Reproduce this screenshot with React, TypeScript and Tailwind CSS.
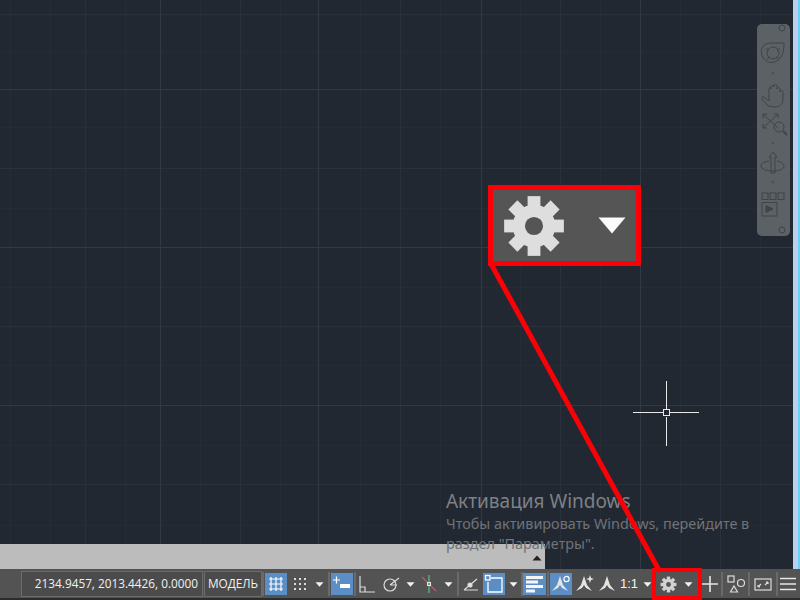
import React from "react";

const Arrow = ({ x = 0 }: { x?: number }) => (
  <svg width="9" height="5" viewBox="0 0 9 5" className="shrink-0" style={x ? { marginLeft: x } : undefined}>
    <path d="M0.5 0.2h8L4.5 4.8z" fill="#f2f2f2" />
  </svg>
);

const Sep = () => <div className="h-[24px] w-[2px] shrink-0 bg-[#6a6a6a]" />;
const Gap = ({ w }: { w: number }) => <div className="shrink-0" style={{ width: w }} />;

const Gear = ({ size, fill = "#d2d2d2", hole = "#555" }: { size: number; fill?: string; hole?: string }) => {
  const teeth = [0, 45, 90, 135, 180, 225, 270, 315];
  return (
    <svg width={size} height={size} viewBox="0 0 24 24">
      {teeth.map((a) => (
        <rect key={a} x="9.6" y="0.8" width="4.8" height="6" fill={fill} transform={`rotate(${a} 12 12)`} />
      ))}
      <circle cx="12" cy="12" r="8" fill={fill} />
      <circle cx="12" cy="12" r="3.4" fill={hole} />
    </svg>
  );
};

const Cell = ({ w, active, children }: { w: number; active?: boolean; children?: React.ReactNode }) => (
  <div
    className={`h-[22px] flex items-center justify-center shrink-0 ${active ? "bg-[#5c8ec6]" : ""}`}
    style={{ width: w }}
  >
    {children}
  </div>
);

const S = ({ children, w = 20, h = 20 }: { children: React.ReactNode; w?: number; h?: number }) => (
  <svg width={w} height={h} viewBox={`0 0 ${w} ${h}`} fill="none" stroke="#dcdcdc" strokeWidth="1.2">
    {children}
  </svg>
);

const Adaptive = ({ extra }: { extra?: React.ReactNode }) => (
  <svg width="20" height="20" viewBox="0 0 20 20">
    <path d="M9 2 12 11 17 17 11 14 9 11 7 14 1 17 6 11z" fill="#e4e4e4" />
    {extra}
  </svg>
);

function Canvas() {
  const vMajor = [160, 318, 481, 640];
  const vMid = [85, 240, 400, 560, 720];
  const hMajor = [89, 247, 405];
  const hMid = [14, 168, 326, 484];
  const v = [10, 50, 125, 200, 280, 360, 440, 520, 600, 680, 760];
  const h = [52, 127, 208, 287, 365, 445, 525];
  const V = (xs: number[], c: string) =>
    xs.map((x) => <line key={x} x1={x + 0.5} x2={x + 0.5} y1="0" y2="600" stroke={c} strokeWidth="1" />);
  const H = (ys: number[], c: string) =>
    ys.map((y) => <line key={y} y1={y + 0.5} y2={y + 0.5} x1="0" x2="800" stroke={c} strokeWidth="1" />);
  return (
    <svg className="absolute inset-0" width="800" height="600">
      {V(v, "#252c36")}
      {H(h, "#252c36")}
      {V(vMid, "#2a313c")}
      {H(hMid, "#2a313c")}
      {V(vMajor, "#323945")}
      {H(hMajor, "#323945")}
    </svg>
  );
}

function NavBar() {
  const c = "#3f4449";
  return (
    <div className="absolute left-[757px] top-[24px] w-[33px] h-[212px] rounded-[5px] bg-[#5c6166]">
      <svg width="33" height="212" viewBox="0 0 33 212" fill="none" stroke={c} strokeWidth="1">
        <circle cx="25" cy="4" r="3" />
        <path d="M16 19c6 0 9 0 11 0 0 7-1 11-3 14-5 7-13 7-17 2-4-5-3-11 0-14 3-2 6-2 9-2z" />
        <circle cx="16" cy="29" r="6" />
        <path d="M9 24l3 3M23 24l-3 3M10 35l3-2M22 35l-3-2" />
        <path d="M14.5 48.5h3L16 50.5z" fill={c} stroke="none" />
        <path d="M11 82c-2-3-5-5-6-7-1-2 1-3 2-2l5 4V65c0-2 2-2 2 0v-2c0-2 3-2 3 0v-1c0-2 3-2 3 0v3c0-2 3-2 3 0v3c0-2 3-2 3 0v7c0 5-3 8-8 8-3 0-5-1-7-1z" />
        <path d="M6 90 21 104M21 90 6 104M6 90v4M6 90h4M21 90h-4M21 90v4M6 104v-4M6 104h4" />
        <circle cx="22" cy="103" r="5" />
        <path d="M26 107l4 4" strokeWidth="2" />
        <path d="M14.5 118.5h3L16 120.5z" fill={c} stroke="none" />
        <path d="M16 128l-4 5h2v16h4v-16h2z" />
        <path d="M12 137c-6 1-8 3-8 5 0 3 5 5 12 5s11-2 11-5c0-2-2-4-7-5" />
        <path d="M14.5 157.5h3L16 159.5z" fill={c} stroke="none" />
        <rect x="5" y="169" width="6" height="6.5" />
        <rect x="13" y="169" width="6" height="6.5" />
        <rect x="21" y="169" width="6" height="6.5" />
        <rect x="5" y="178.5" width="15" height="13.5" />
        <path d="M9 181.5l7 3.5-7 3.5z" fill={c} />
        <circle cx="25" cy="206" r="3" />
      </svg>
    </div>
  );
}

function StatusBar() {
  return (
    <div className="h-[31px] shrink-0 pt-[1px] border-b-[2px] border-[#2c2c2c] bg-[#535353] flex items-center text-[#f2f2f2] text-[11.8px]">
      <Gap w={21} />
      <div className="w-[182px] h-[26px] bg-[#4b4b4b] border border-[#6c6c6c] flex items-center justify-end pr-[4px] shrink-0">
        2134.9457, 2013.4426, 0.0000
      </div>
      <Gap w={1} />
      <div className="w-[58px] h-[26px] bg-[#4b4b4b] border border-[#6c6c6c] flex items-center justify-center shrink-0">
        МОДЕЛЬ
      </div>
      <Sep />
      <Gap w={1} />
      <Cell w={22} active>
        <S>
          <path d="M5 3v14M10 3v14M15 3v14M3 5h14M3 10h14M3 15h14" stroke="#fff" />
        </S>
      </Cell>
      <Gap w={1} />
      <Cell w={24}>
        <svg width="16" height="16" viewBox="0 0 16 16" fill="#dcdcdc">
          {[2, 7, 12].flatMap((y) =>
            [2, 7, 12].map((x) => <rect key={`${x}-${y}`} x={x} y={y} width="2" height="2" />),
          )}
        </svg>
      </Cell>
      <Cell w={14}>
        <Arrow />
      </Cell>
      <Gap w={2} />
      <Sep />
      <Gap w={1} />
      <Cell w={22} active>
        <svg width="20" height="20" viewBox="0 0 20 20">
          <path d="M1 6h7M4.5 2.5v7" stroke="#fff" strokeWidth="1.2" />
          <rect x="8" y="10" width="10" height="4" fill="#fff" />
        </svg>
      </Cell>
      <Gap w={1} />
      <Sep />
      <Cell w={22}>
        <S>
          <path d="M3 2v16h15M3 13h5v5" />
        </S>
      </Cell>
      <Cell w={25}>
        <S>
          <circle cx="9" cy="11" r="6" />
          <path d="M9 11 18 4M9 11h7" />
        </S>
      </Cell>
      <Cell w={14}>
        <Arrow />
      </Cell>
      <Cell w={24}>
        <svg width="20" height="20" viewBox="0 0 20 20" fill="none">
          <path d="M3 3 17 17" stroke="#c05a66" strokeWidth="1.2" />
          <path d="M10 1v18" stroke="#5fbf8a" strokeWidth="1.2" />
          <rect x="8.5" y="8.5" width="3" height="3" stroke="#e6e6e6" />
        </svg>
      </Cell>
      <Cell w={15}>
        <Arrow />
      </Cell>
      <Gap w={1} />
      <Sep />
      <Cell w={24}>
        <S>
          <path d="M3 16h14M3 16 16 5" />
          <circle cx="9" cy="11" r="2" fill="#e6e6e6" />
        </S>
      </Cell>
      <Cell w={22} active>
        <svg width="20" height="20" viewBox="0 0 20 20" fill="none" stroke="#fff" strokeWidth="1.3">
          <path d="M7 4h11v14H4V8" />
          <rect x="1.5" y="1.5" width="4.5" height="4.5" />
        </svg>
      </Cell>
      <Cell w={16}>
        <Arrow />
      </Cell>
      <Sep />
      <Cell w={23} active>
        <svg width="20" height="20" viewBox="0 0 20 20" fill="#f4f4f4">
          <rect x="1" y="2" width="17" height="3" />
          <rect x="1" y="6.5" width="12" height="3" />
          <rect x="1" y="11" width="17" height="3" />
          <rect x="1" y="15.5" width="9" height="3" />
        </svg>
      </Cell>
      <Gap w={1} />
      <Sep />
      <Gap w={1} />
      <Cell w={22} active>
        <Adaptive extra={<circle cx="15.5" cy="5" r="2.6" fill="none" stroke="#fff" strokeWidth="1.2" />} />
      </Cell>
      <Cell w={25}>
        <Adaptive extra={<path d="M15 1l1 3 3 1-3 1-1 3-1-3-3-1 3-1z" fill="#e4e4e4" />} />
      </Cell>
      <Cell w={21}>
        <Adaptive />
      </Cell>
      <Cell w={22}>
        <span className="text-[13px] font-['Liberation_Sans',sans-serif]">1:1</span>
      </Cell>
      <Cell w={14}>
        <Arrow />
      </Cell>
      <div className="flex items-center w-[46px] shrink-0">
        <Gap w={6} />
        <Gear size={17} />
        <Arrow x={7} />
      </div>
      <Cell w={20}>
        <svg width="18" height="18" viewBox="0 0 18 18">
          <path d="M9 1v16M1 9h16" stroke="#e6e6e6" strokeWidth="1.6" />
        </svg>
      </Cell>
      <Gap w={1} />
      <Sep />
      <Cell w={25}>
        <S>
          <rect x="2" y="2" width="6" height="6" />
          <circle cx="15" cy="9" r="3.5" />
          <path d="M8 12l3.5 6h-7z" />
        </S>
      </Cell>
      <Sep />
      <Cell w={26}>
        <S>
          <rect x="2" y="5" width="16" height="11" />
          <path d="M5 13l3-3M5 13v-2M5 13h2M15 8l-3 3M15 8v2M15 8h-2" />
        </S>
      </Cell>
      <Sep />
      <Cell w={20}>
        <svg width="18" height="18" viewBox="0 0 18 18">
          <path d="M1 3.5h16M1 9h16M1 14.5h16" stroke="#e6e6e6" strokeWidth="1.6" />
        </svg>
      </Cell>
    </div>
  );
}

export default function App() {
  return (
    <div className="relative w-[800px] h-[600px] overflow-hidden flex flex-col bg-[#212831] font-['Open_Sans','Liberation_Sans',sans-serif]">
      <Canvas />
      <div className="relative flex-1 flex flex-col justify-end">
        <div className="w-[545px] h-[25px] bg-[#bcbcbc] relative">
          <svg className="absolute right-[3px] bottom-[8px]" width="10" height="6" viewBox="0 0 10 6">
            <path d="M5 0.5 9.5 5.5h-9z" fill="#222" />
          </svg>
        </div>
      </div>
      <div className="relative">
        <StatusBar />
      </div>

      <NavBar />

      {/* sliver of whatever sits behind the window */}
      <div className="absolute right-0 top-0 w-[7px] h-[569px] flex">
        <div className="w-[5px] bg-[#b9d0ee]" />
        <div className="w-[2px] bg-[#6fd0f5]" />
      </div>

      {/* watermark */}
      <div className="absolute left-[446px] top-[488px] text-[#7d8186] font-['Noto_Sans','Open_Sans',sans-serif]">
        <div className="text-[19px] leading-[26px]">Активация Windows</div>
        <div className="text-[14.4px] leading-[20px] w-[325px] text-[#6f7378]">
          Чтобы активировать Windows, перейдите в раздел "Параметры".
        </div>
      </div>

      {/* crosshair */}
      <svg className="absolute left-[630px] top-[378px]" width="72" height="72" viewBox="0 0 72 72">
        <path d="M36.5 3v29M36.5 39v29M3 34.5h30M40 34.5h29" stroke="#e8e8e8" strokeWidth="1" />
        <rect x="33.5" y="31.5" width="6" height="6" fill="none" stroke="#e8e8e8" strokeWidth="1" />
      </svg>

      {/* callout line */}
      <svg className="absolute inset-0 pointer-events-none" width="800" height="600">
        <line x1="490" y1="262" x2="660" y2="572" stroke="#fb0007" strokeWidth="5" />
      </svg>

      {/* magnified callout */}
      <div className="absolute left-[488px] top-[185px] w-[153px] h-[81px] border-[5px] border-[#fb0007] bg-[#555555] flex items-center">
        <div className="ml-[9px] flex blur-[0.6px]">
          <Gear size={64} fill="#dedede" />
        </div>
        <svg className="ml-[32px] blur-[0.4px]" width="28" height="17" viewBox="0 0 28 17">
          <path d="M0.5 0.5h27L14 16.5z" fill="#fbfbfb" />
        </svg>
      </div>

      {/* small red frame */}
      <div className="absolute left-[652px] top-[568px] w-[50px] h-[32px] border-[4px] border-[#fb0007]" />
    </div>
  );
}
